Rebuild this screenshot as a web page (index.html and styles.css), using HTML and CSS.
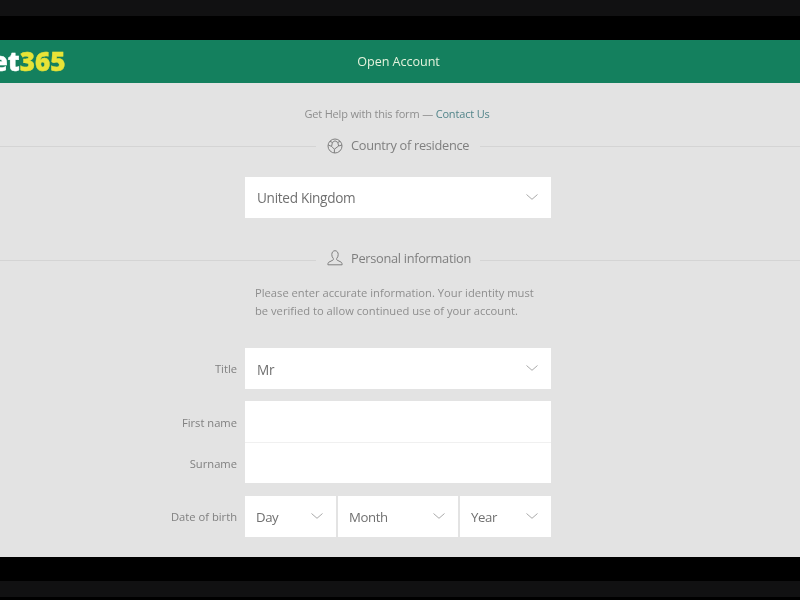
FILE: index.html
```html
<!DOCTYPE html>
<html>
<head>
    <meta charset="UTF-8">
    <title>Open Account</title>
    <link rel="stylesheet" href="styles.css">
</head>
<body>
    <div class="bar-outer"></div>
    <div class="bar-inner"></div>
    <header class="header">
        <div class="logo"><span class="logo-bet">bet</span><span class="logo-num">365</span></div>
        <div class="header-title">Open Account</div>
    </header>
    <main class="main">
        <p class="help">Get Help with this form — <a href="#">Contact Us</a></p>

        <div class="section">
            <span class="rule-left"></span>
            <svg class="section-icon" viewBox="0 0 16 16">
                <circle cx="8" cy="8" r="7"/>
                <path d="M3 3.400 5.400 4.400 8 2.800 10.800 4.400 13 3.400M5.400 4.400 4.600 8.400 7.400 11.200 7.400 15M10.800 4.400 11.600 8 7.400 11.200M4.600 8.400 1.200 7M11.600 8 15 7"/>
            </svg>
            <span class="section-name">Country of residence</span>
            <span class="rule-right"></span>
        </div>

        <div class="form-row country-row">
            <span></span>
            <div class="field select country">United Kingdom
                <svg class="chev" viewBox="0 0 12 6"><path d="M.5.5 6 5.300 11.500.5"/></svg>
            </div>
        </div>

        <div class="section personal">
            <span class="rule-left"></span>
            <svg class="section-icon" viewBox="0 0 16 16">
                <path d="M4.800 4.600C4.800 2.200 6.200.7 8 .7s3.200 1.500 3.200 3.900c0 1.700-.6 2.900-1.400 3.700-.5.6-.4 1.400.3 1.800l3.900 2c.8.4 1.100 1 1.100 2.700H.9c0-1.700.3-2.300 1.100-2.700l3.900-2c.7-.4.800-1.200.3-1.800-.8-.8-1.400-2-1.400-3.700Z"/>
            </svg>
            <span class="section-name">Personal information</span>
            <span class="rule-right"></span>
        </div>

        <p class="intro">Please enter accurate information. Your identity must<br>be verified to allow continued use of your account.</p>

        <div class="form-row title-row">
            <label class="label">Title</label>
            <div class="field select">Mr
                <svg class="chev" viewBox="0 0 12 6"><path d="M.5.5 6 5.300 11.500.5"/></svg>
            </div>
        </div>

        <div class="form-row name-row">
            <div class="name-labels">
                <label class="label">First name</label>
                <label class="label">Surname</label>
            </div>
            <div class="name-fields">
                <div class="field first-name"></div>
                <div class="field surname"></div>
            </div>
        </div>

        <div class="form-row dob-row">
            <label class="label">Date of birth</label>
            <div class="dob">
                <div class="field select">Day
                    <svg class="chev" viewBox="0 0 12 6"><path d="M.5.5 6 5.300 11.500.5"/></svg>
                </div>
                <div class="field select">Month
                    <svg class="chev" viewBox="0 0 12 6"><path d="M.5.5 6 5.300 11.500.5"/></svg>
                </div>
                <div class="field select">Year
                    <svg class="chev" viewBox="0 0 12 6"><path d="M.5.5 6 5.300 11.500.5"/></svg>
                </div>
            </div>
        </div>
    </main>
    <div class="bar-inner"></div>
    <div class="bar-outer"></div>
</body>
</html>
```

FILE: styles.css
```css
*{
    margin: 0;
    padding: 0;
    box-sizing: border-box;
}
html,body{
    width: 100%;
    height: 100%;
    overflow: hidden;
}
body{
    background: #000;
    font-family: "Open Sans", "Liberation Sans", sans-serif;
    color: #808080;
    filter: blur(.35px);
}
.bar-outer{
    height: 16px;
    background: #111112;
}
.bar-inner{
    height: 24px;
    background: #000;
}
.header{
    height: 43px;
    background: #14805e;
    display: grid;
    grid-template-columns: 1fr auto 1fr;
    align-items: center;
    padding-right: 3px;
    overflow: hidden;
}
.logo{
    margin-left: -25px;
    font-size: 26px;
    font-weight: 800;
    line-height: 43px;
    color: #fff;
    white-space: nowrap;
    -webkit-text-stroke: .4px;
}
.logo-num{
    color: #e8e337;
}
.header-title{
    font-size: 12.6px;
    letter-spacing: -.05px;
    padding-bottom: 1px;
    color: #e4f2dc;
}
.main{
    height: 474px;
    background: #e3e3e3;
    padding-top: 22px;
    overflow: hidden;
}
.help{
    font-size: 11px;
    letter-spacing: -.17px;
    line-height: 18px;
    padding-right: 6px;
    text-align: center;
    color: #8e8e8e;
}
.help a{
    color: #52858a;
    text-decoration: none;
}
.section{
    margin-top: 13px;
    height: 20px;
    display: flex;
    align-items: center;
}
.section.personal{
    margin-top: 30px;
}
.personal .rule-left,
.personal .rule-right{
    margin-top: 4px;
}
.rule-left{
    width: 316px;
    height: 1px;
    background: #d4d4d4;
}
.rule-right{
    flex: 1;
    height: 1px;
    background: #d4d4d4;
}
.section-icon{
    width: 16px;
    height: 16px;
    margin-left: 11px;
    fill: none;
    stroke: #7f7f7f;
    stroke-width: 1;
}
.section-name{
    width: 118px;
    white-space: nowrap;
    font-size: 12.8px;
    letter-spacing: -.3px;
    margin-left: 8px;
    margin-right: 11px;
    margin-bottom: 2px;
    color: #7f7f7f;
}
.personal .section-name{
    margin-bottom: 0;
}
.form-row{
    display: grid;
    grid-template-columns: 237px 306px;
    column-gap: 8px;
}
.country-row{
    margin-top: 21px;
}
.title-row{
    margin-top: 28px;
    align-items: center;
}
.name-row{
    margin-top: 12px;
}
.dob-row{
    margin-top: 13px;
    align-items: center;
}
.label{
    display: block;
    text-align: right;
    font-size: 11.2px;
    color: #808080;
}
.field{
    height: 41px;
    background: #fff;
}
.select{
    position: relative;
    display: flex;
    align-items: center;
    padding-left: 12px;
    padding-top: 1px;
    font-size: 13.6px;
    letter-spacing: -.3px;
    color: #707070;
}
.select.country{
    padding-top: 0;
}
.chev{
    position: absolute;
    top: 17px;
    right: 13px;
    width: 12px;
    height: 6px;
    fill: none;
    stroke: #aaa;
    stroke-width: 1;
}
.intro{
    margin-top: 16px;
    padding-left: 255px;
    font-size: 11.2px;
    line-height: 18px;
    color: #8e8e8e;
}
.name-labels{
    display: grid;
    grid-template-rows: 42px 40px;
    align-items: center;
}
.name-fields{
    display: flex;
    flex-direction: column;
}
.first-name{
    height: 42px;
    border-bottom: 1px solid #f0f0f0;
}
.surname{
    height: 40px;
}
.dob{
    display: grid;
    grid-template-columns: 91px 120px 91px;
    column-gap: 2px;
}
.dob .select{
    padding-left: 11px;
    font-size: 13.2px;
    letter-spacing: -.4px;
}
```
